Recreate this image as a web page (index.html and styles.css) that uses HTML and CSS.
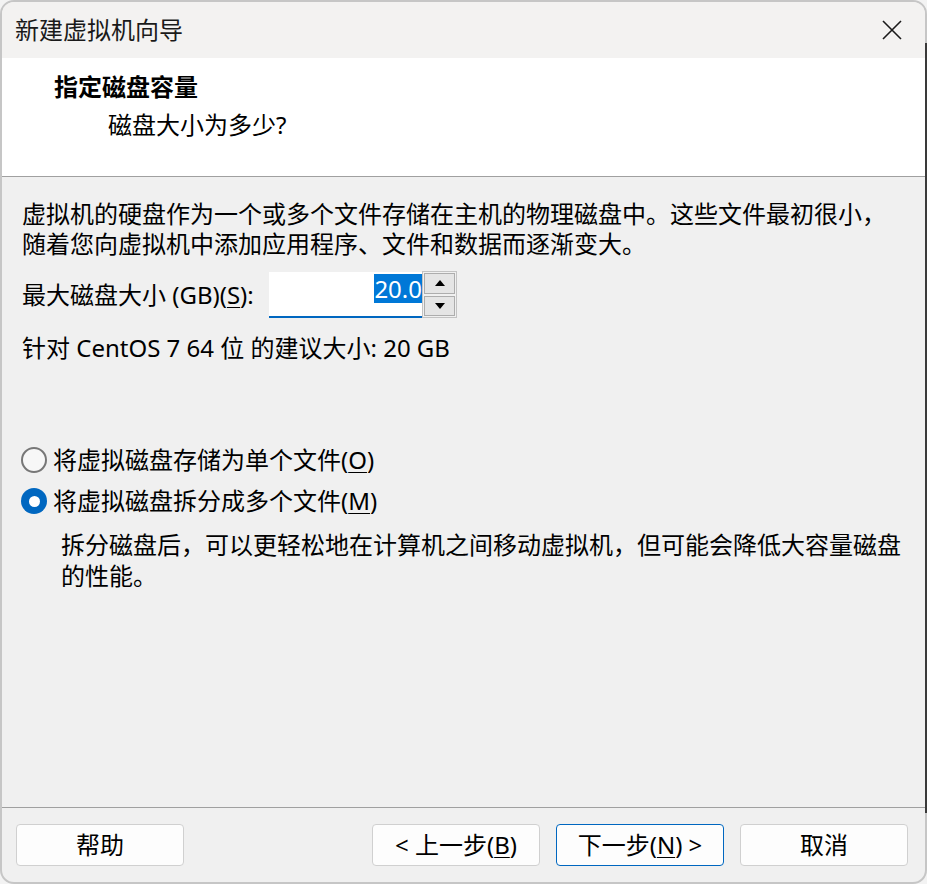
FILE: index.html
```html
<!DOCTYPE html>
<html lang="zh-CN">
<head>
<meta charset="utf-8">
<title>新建虚拟机向导</title>
<link rel="stylesheet" href="styles.css">
</head>
<body>
<div class="window">
  <div class="titlebar">
    <span class="title">新建虚拟机向导</span>
    <span class="close" aria-label="关闭">
      <svg width="20" height="20" viewBox="0 0 20 20"><path d="M1 1 L19 19 M19 1 L1 19" stroke="#1a1a1a" stroke-width="1.6" fill="none"/></svg>
    </span>
  </div>
  <div class="header">
    <div class="h-title">指定磁盘容量</div>
    <div class="h-sub">磁盘大小为多少?</div>
  </div>
  <div class="content">
    <p class="intro">虚拟机的硬盘作为一个或多个文件存储在主机的物理磁盘中。这些文件最初很小，<br>随着您向虚拟机中添加应用程序、文件和数据而逐渐变大。</p>
    <div class="size-row">
      <span class="size-label">最大磁盘大小 (GB)(<u>S</u>):</span>
      <div class="spin">
        <div class="spin-input"><span class="sel">20.0</span></div>
        <div class="spin-btns">
          <div class="sb sb-up"><svg width="10" height="6" viewBox="0 0 10 6"><polygon points="0,6 10,6 5,0" fill="#000"/></svg></div>
          <div class="sb sb-down"><svg width="10" height="6" viewBox="0 0 10 6"><polygon points="0,0 10,0 5,6" fill="#000"/></svg></div>
        </div>
      </div>
    </div>
    <div class="recommend">针对 CentOS 7 64 位 的建议大小: 20 GB</div>
    <div class="radio-row first">
      <span class="radio"></span>
      <span class="radio-text">将虚拟磁盘存储为单个文件(<u>O</u>)</span>
    </div>
    <div class="radio-row second">
      <span class="radio checked"></span>
      <span class="radio-text">将虚拟磁盘拆分成多个文件(<u>M</u>)</span>
    </div>
    <p class="desc">拆分磁盘后，可以更轻松地在计算机之间移动虚拟机，但可能会降低大容量磁盘<br>的性能。</p>
  </div>
  <div class="footer">
    <div class="btn">帮助</div>
    <div class="btn-group">
      <div class="btn">&lt; 上一步(<u>B</u>)</div>
      <div class="btn btn-default">下一步(<u>N</u>) &gt;</div>
      <div class="btn">取消</div>
    </div>
  </div>
</div>
<div class="edge-shadow"></div>
</body>
</html>
```

FILE: styles.css
```css
* { box-sizing: border-box; }
html, body { margin: 0; padding: 0; }
body {
  width: 927px;
  height: 884px;
  background: #f3f3f3;
  font-family: "Noto Sans", "Noto Sans CJK SC", sans-serif;
  font-size: 24px;
  color: #000;
  position: relative;
  overflow: hidden;
}
u { text-decoration-thickness: 1px; text-underline-offset: 3px; }

.window {
  width: 927px;
  height: 884px;
  border: 2px solid #c6c6c6;
  border-radius: 14px;
  overflow: hidden;
  display: flex;
  flex-direction: column;
  background: #f0f0f0;
}

.titlebar {
  flex: none;
  height: 56px;
  background: #f3f2f1;
  display: flex;
  align-items: center;
  justify-content: space-between;
  padding: 0 23px 0 13px;
}
.title { line-height: 30px; color: #1a1a1a; }
.close { display: flex; width: 20px; height: 20px; }

.header {
  flex: none;
  height: 119px;
  background: #fff;
  border-bottom: 1px solid #a0a0a0;
  padding-top: 14px;
}
.h-title { font-weight: bold; line-height: 30px; padding-left: 52px; }
.h-sub { line-height: 30px; padding-left: 106px; margin-top: 8px; }

.content {
  flex: 1;
  padding: 22px 20px 0 20px;
}
.intro { margin: 0; line-height: 30px; }

.size-row {
  display: flex;
  align-items: center;
  margin-top: 12px;
  height: 47px;
}
.size-label { flex: none; width: 247px; line-height: 30px; }
.spin { display: flex; height: 47px; }
.spin-input {
  width: 153px;
  height: 46px;
  margin-top: 1px;
  background: #fff;
  border-bottom: 2px solid #0067c0;
  display: flex;
  justify-content: flex-end;
  align-items: flex-start;
  padding-top: 2px;
}
.sel {
  background: #0078d7;
  color: #fff;
  line-height: 29px;
  height: 29px;
  padding: 0 0 0 0;
}
.spin-btns {
  width: 35px;
  height: 47px;
  border: 1px solid #c3c3c3;
  padding: 1px;
  display: flex;
  flex-direction: column;
  gap: 2px;
}
.sb {
  flex: 1;
  background: #e5e5e5;
  border: 1px solid #adadad;
  display: flex;
  align-items: center;
  justify-content: center;
}

.recommend { line-height: 30px; margin-top: 15px; }

.radio-row {
  display: flex;
  align-items: center;
  height: 30px;
  margin-left: -1px;
}
.radio-row.first { margin-top: 82px; }
.radio-row.second { margin-top: 11px; }
.radio {
  flex: none;
  width: 26px;
  height: 26px;
  border-radius: 50%;
  border: 2px solid #777;
  background: #f7f7f7;
  margin-right: 6px;
  display: flex;
  align-items: center;
  justify-content: center;
}
.radio.checked {
  border: none;
  background: #0067c0;
}
.radio.checked::after {
  content: "";
  width: 11px;
  height: 11px;
  border-radius: 50%;
  background: #fff;
}
.radio-text { line-height: 30px; }

.desc {
  margin: 13px 0 0 0;
  padding-left: 39px;
  line-height: 31px;
}

.footer {
  flex: none;
  height: 75px;
  border-top: 1px solid #a0a0a0;
  padding: 16px 17px 0 14px;
  display: flex;
  justify-content: space-between;
  align-items: flex-start;
}
.btn-group { display: flex; gap: 16px; }
.btn {
  width: 168px;
  height: 42px;
  background: #fdfdfd;
  border: 1px solid #d0d0d0;
  border-radius: 4px;
  display: flex;
  align-items: center;
  justify-content: center;
  line-height: 30px;
}
.btn-default { border-color: #0067c0; }

.edge-shadow {
  position: absolute;
  left: 925px;
  top: 43px;
  width: 2px;
  height: 770px;
  background: #3a3a3a;
}
```
